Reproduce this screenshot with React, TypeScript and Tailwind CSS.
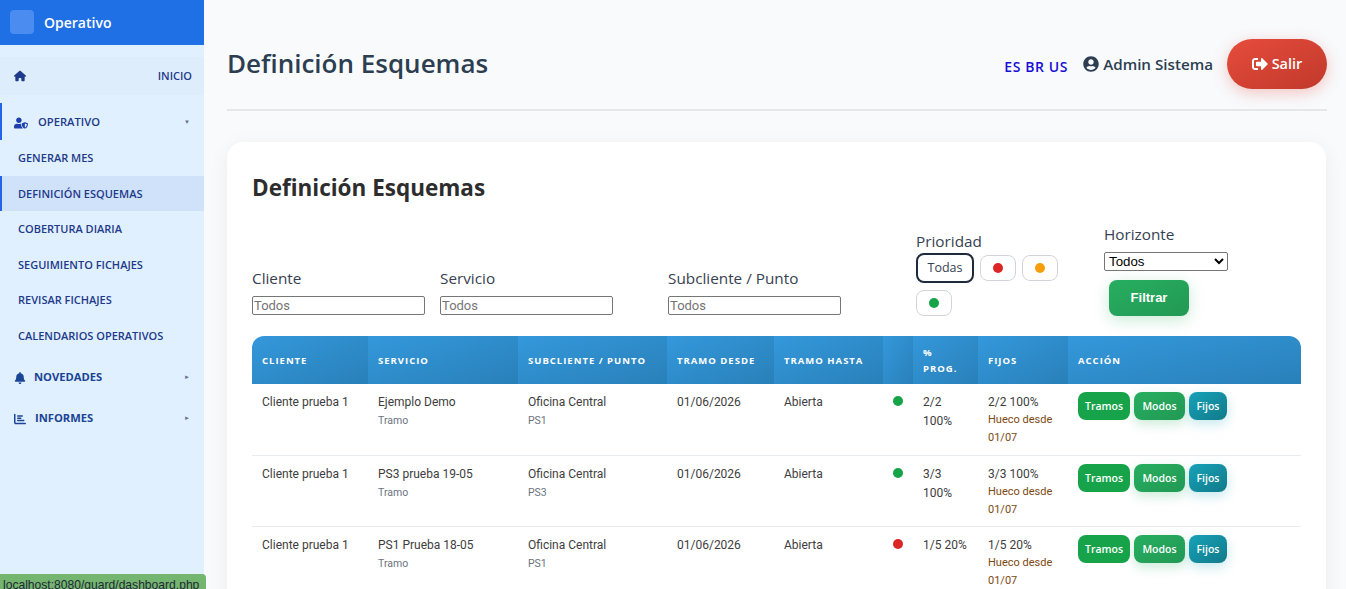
import { FaUserShield, FaBell, FaUserCircle, FaSignOutAlt } from 'react-icons/fa';
import { FaChartBar, FaHouse } from 'react-icons/fa6';
import type { ReactNode } from 'react';

const rows = [
  { servicio: 'Ejemplo Demo', punto: 'PS1', dot: 'bg-[#16a34a]', prog: ['2/2', '100%'], fijos: '2/2 100%' },
  { servicio: 'PS3 prueba 19-05', punto: 'PS3', dot: 'bg-[#16a34a]', prog: ['3/3', '100%'], fijos: '3/3 100%' },
  { servicio: 'PS1 Prueba 18-05', punto: 'PS1', dot: 'bg-[#dc2626]', prog: ['1/5 20%'], fijos: '1/5 20%' },
];

const headers = [
  { label: 'CLIENTE', w: 'w-[116px]' },
  { label: 'SERVICIO', w: 'w-[150px]' },
  { label: 'SUBCLIENTE / PUNTO', w: 'w-[149px]' },
  { label: 'TRAMO DESDE', w: 'w-[107px]' },
  { label: 'TRAMO HASTA', w: 'w-[109px]' },
  { label: '', w: 'w-[30px]' },
  { label: '%\nPROG.', w: 'w-[65px]' },
  { label: 'FIJOS', w: 'w-[90px]' },
  { label: 'ACCIÓN', w: 'w-[233px]' },
];

const SubItem = ({ children, active }: { children: ReactNode; active?: boolean }) => (
  <a
    href="#"
    className={`flex h-[35.7px] items-center text-[11px] font-semibold text-[#1e3a8a] ${
      active ? 'border-l-2 border-[#2563eb] bg-[#cfe2fa] pl-[16px] pt-[2px]' : 'pl-[18px]'
    }`}
  >
    {children}
  </a>
);

const Filter = ({ label, w }: { label: string; w: string }) => (
  <div className={w}>
    <label className="mb-[7px] block text-[15.3px] leading-[22px] text-[#374151]">{label}</label>
    <input
      placeholder="Todos"
      className="block h-[19px] w-[173px] rounded-[2px] border border-[#767676] px-[1px] font-['Roboto',sans-serif] text-[13px] placeholder:text-[#757575]"
    />
  </div>
);

const App = () => {
  return (
    <div className="flex h-[589px] w-[1346px] overflow-hidden bg-[#f8fafc] font-['Open_Sans','Noto_Sans',sans-serif]">
      {/* Sidebar */}
      <aside className="flex w-[204px] shrink-0 flex-col bg-[#e0f0fe]">
        <div className="flex h-[45px] items-center gap-[10px] bg-[#1f6fe5] pb-[1px] pl-[10px]">
          <div className="h-6 w-6 rounded-[4px] bg-[#4a8cf0]" />
          <span className="text-[14px] font-semibold text-white">Operativo</span>
        </div>
        <nav className="pt-[12px]">
          <a href="#" className="flex h-[38px] items-center justify-between bg-[#deedfc] pl-[14px] pr-[12px] text-[11px] font-semibold text-[#1e3a8a]">
            <FaHouse className="text-[12px] text-[#1e3a8a]" />
            INICIO
          </a>
          <div className="mt-[8px] flex h-[37px] items-center border-l-2 border-[#2563eb] pl-[12px] pr-[14px] pt-[2px] text-[11.2px] font-semibold text-[#1e3a8a]">
            <FaUserShield className="text-[14px] text-[#1e40af]" />
            <span className="ml-[10px] flex-1">OPERATIVO</span>
            <span className="text-[6px] text-[#64748b]">▼</span>
          </div>
          <SubItem>GENERAR MES</SubItem>
          <SubItem active>DEFINICIÓN ESQUEMAS</SubItem>
          <SubItem>COBERTURA DIARIA</SubItem>
          <SubItem>SEGUIMIENTO FICHAJES</SubItem>
          <SubItem>REVISAR FICHAJES</SubItem>
          <SubItem>CALENDARIOS OPERATIVOS</SubItem>
          <div className="mt-[3px] flex h-[41px] items-center pl-[14px] pr-[14px] text-[11.2px] font-bold text-[#1a4494]">
            <FaBell className="text-[12px]" />
            <span className="ml-[8px] flex-1">NOVEDADES</span>
            <span className="text-[6px] text-[#64748b]">►</span>
          </div>
          <div className="flex h-[41px] items-center pl-[14px] pr-[14px] text-[11.2px] font-bold text-[#1a4494]">
            <FaChartBar className="text-[12px]" />
            <span className="ml-[9px] flex-1">INFORMES</span>
            <span className="text-[6px] text-[#64748b]">►</span>
          </div>
        </nav>
      </aside>

      {/* Main */}
      <main className="min-w-0 flex-1 pl-[23px] pr-[19px] pt-[39px]">
        <header className="flex h-[72px] items-start justify-between border-b-2 border-[#e5e7eb]">
          <h1 className="mt-[2px] text-[26px] font-semibold leading-[44px] text-[#2c3e50]">Definición Esquemas</h1>
          <div className="flex items-center">
            <span className="mt-[5px] text-[14px] font-semibold tracking-[0.6px] text-[#1a0dd6]">ES BR US</span>
            <span className="ml-[15px] flex items-center gap-[4px] text-[15.2px] font-semibold text-[#2c3e50]">
              <FaUserCircle className="text-[16px]" />
              Admin Sistema
            </span>
            <button className="ml-[14px] flex h-[50px] w-[100px] items-center justify-center gap-[4px] rounded-[25px] bg-gradient-to-br from-[#e74c3c] to-[#c0392b] text-[14.5px] font-semibold text-white shadow-[0_4px_15px_rgba(231,76,60,0.3)]">
              <FaSignOutAlt className="text-[16px]" />
              Salir
            </button>
          </div>
        </header>

        <section className="mr-[1px] mt-[31px] h-[600px] rounded-2xl bg-white px-[25px] pt-[30px] shadow-[0_4px_20px_rgba(0,0,0,0.06)]">
          <h2 className="text-[22.5px] font-bold leading-[32px] text-[#2d2d2d]">Definición Esquemas</h2>

          <div className="mt-[20px] flex h-[92px] items-end">
            <div className="flex pb-[1px]">
              <Filter label="Cliente" w="w-[188px]" />
              <Filter label="Servicio" w="w-[228px]" />
              <Filter label="Subcliente / Punto" w="w-[248px]" />
            </div>
            <div className="w-[188px]">
              <div className="text-[15.3px] leading-[22px] text-[#374151]">Prioridad</div>
              <div className="mt-[1px] flex w-[150px] flex-wrap items-center gap-x-[6px] gap-y-[7px]">
                <button className="h-[30px] w-[58px] rounded-[8px] border-2 border-[#1e293b] pt-[1px] text-[12.5px] text-[#374151]">Todas</button>
                {['bg-[#dc2626]', 'bg-[#f59e0b]', 'bg-[#16a34a]'].map((c) => (
                  <button key={c} className="flex h-[26px] w-[36px] items-center justify-center rounded-[8px] border border-[#d1d5db]">
                    <span className={`h-[10px] w-[10px] rounded-full ${c}`} />
                  </button>
                ))}
              </div>
            </div>
            <div>
              <div className="text-[15.3px] leading-[22px] text-[#374151]">Horizonte</div>
              <select className="mt-[7px] block h-[19px] w-[124px] rounded-[2px] border border-[#767676] bg-white font-['Liberation_Sans',sans-serif] text-[13.3px] font-medium text-black">
                <option>Todos</option>
              </select>
              <button className="ml-[5px] mt-[9px] h-[36px] w-[80px] rounded-[8px] bg-gradient-to-br from-[#27ae60] to-[#229954] font-['Liberation_Sans',sans-serif] text-[13px] font-bold text-white shadow-[0_4px_15px_rgba(39,174,96,0.25)]">
                Filtrar
              </button>
            </div>
          </div>

          <table className="mt-[20px] w-[1049px] table-fixed border-collapse font-['Roboto',sans-serif]">
            <thead>
              <tr className="h-[48px]">
                {headers.map((h, i) => (
                  <th
                    key={i}
                    className={`${h.w} whitespace-pre-line bg-gradient-to-br from-[#3498db] to-[#2980b9] px-[10px] pt-[1px] text-left font-['Open_Sans',sans-serif] text-[9.5px] font-bold leading-[16px] tracking-[1px] text-white ${
                      i === 0 ? 'rounded-tl-[12px]' : ''
                    } ${i === headers.length - 1 ? 'rounded-tr-[12px]' : ''}`}
                  >
                    {h.label}
                  </th>
                ))}
              </tr>
            </thead>
            <tbody className="align-top text-[12px] leading-[18px] text-[#3d3d3d]">
              {rows.map((r) => (
                <tr key={r.servicio} className="h-[71px] border-b border-[#e9ecef]">
                  <td className="px-[10px] pt-[9px]">Cliente prueba 1</td>
                  <td className="px-[10px] pt-[9px]">
                    {r.servicio}
                    <div className="text-[10.5px] leading-[19px] text-[#6b7280]">Tramo</div>
                  </td>
                  <td className="px-[10px] pt-[9px]">
                    Oficina Central
                    <div className="text-[10.5px] leading-[19px] text-[#6b7280]">{r.punto}</div>
                  </td>
                  <td className="px-[10px] pt-[9px]">01/06/2026</td>
                  <td className="px-[10px] pt-[9px]">Abierta</td>
                  <td className="px-[10px] pt-[12px]">
                    <span className={`block h-[10px] w-[10px] rounded-full ${r.dot}`} />
                  </td>
                  <td className="px-[10px] pt-[9px]">
                    {r.prog.map((p) => (
                      <div key={p} className="leading-[19px]">{p}</div>
                    ))}
                  </td>
                  <td className="px-[10px] pt-[9px]">
                    {r.fijos}
                    <div className="text-[11px] leading-[18px] text-[#7c4a12]">Hueco desde 01/07</div>
                  </td>
                  <td className="px-[10px] pt-[8px]">
                    <div className="flex gap-[4px] font-['Open_Sans',sans-serif] text-[10.5px] font-semibold text-white">
                      <button className="h-[28px] w-[52px] rounded-[8px] bg-[#16a34a]">Tramos</button>
                      <button className="h-[28px] w-[51px] rounded-[8px] bg-gradient-to-br from-[#27ae60] to-[#229954] shadow-[0_4px_12px_rgba(39,174,96,0.25)]">Modos</button>
                      <button className="h-[28px] w-[38px] rounded-[8px] bg-gradient-to-br from-[#17a2b8] to-[#117a8b] shadow-[0_4px_12px_rgba(23,162,184,0.25)]">Fijos</button>
                    </div>
                  </td>
                </tr>
              ))}
            </tbody>
          </table>
        </section>
      </main>

      {/* Status tooltip */}
      <div className="absolute bottom-0 left-0 h-[15px] w-[206px] overflow-hidden rounded-tr-[4px] bg-[#74b56f] pl-[3px] font-['Liberation_Sans',sans-serif] text-[12.1px] leading-[22px] text-[#1f2937]">
        localhost:8080/guard/dashboard.php
      </div>
    </div>
  );
};

export default App;
